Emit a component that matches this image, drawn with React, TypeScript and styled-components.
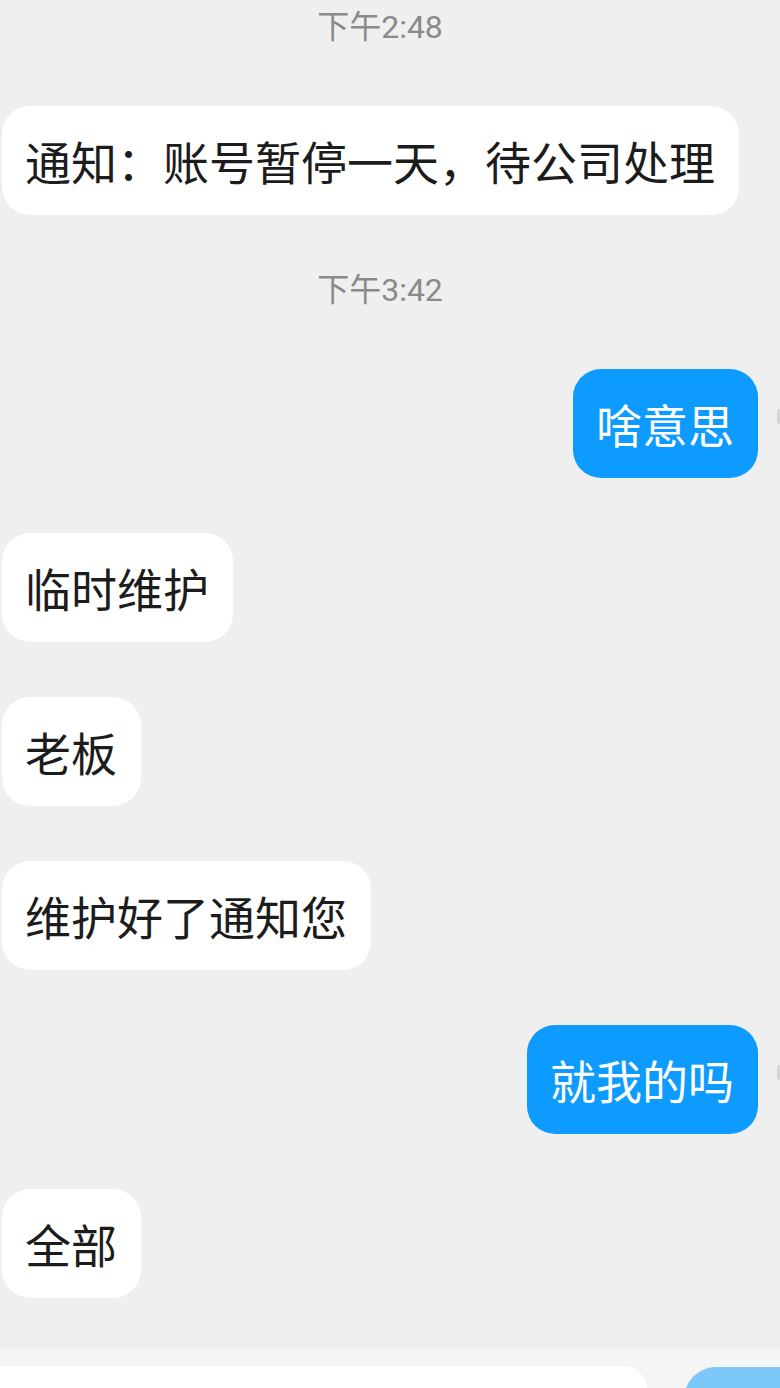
import styled, { createGlobalStyle } from "styled-components";

const GlobalStyle = createGlobalStyle`
  html, body {
    margin: 0;
    padding: 0;
    background: #efefef;
    overflow: hidden;
  }
  body {
    font-family: "Noto Sans CJK SC", "Noto Sans", sans-serif;
  }
`;

const Container = styled.div`
  width: 780px;
  height: 1388px;
  overflow: hidden;
  display: flex;
  flex-flow: column nowrap;
  background: #efefef;
`;

const TimeLabel = styled.div`
  margin-top: 51px;
  padding-right: 20px;
  height: 48px;
  line-height: 48px;
  text-align: center;
  font-family: Roboto, "Noto Sans CJK SC", sans-serif;
  font-size: 32px;
  color: #8a8a8a;

  &:first-child {
    margin-top: 3px;
  }
`;

const Row = styled.div<{ $mine?: boolean }>`
  margin-top: 55px;
  display: flex;
  flex-flow: row nowrap;
  align-items: center;
  justify-content: ${(props) => (props.$mine ? "flex-end" : "flex-start")};
  padding-left: ${(props) => (props.$mine ? "0" : "2px")};
`;

const Bubble = styled.div<{ $mine?: boolean }>`
  padding: 24px 24px 24px 23px;
  border-radius: 28px;
  font-size: 46px;
  line-height: 61px;
  white-space: nowrap;
  background: ${(props) => (props.$mine ? "#0e9bff" : "#ffffff")};
  color: ${(props) => (props.$mine ? "#ffffff" : "#1c1c1c")};
`;

const Status = styled.span`
  display: block;
  width: 3px;
  height: 15px;
  margin-left: 19px;
  margin-bottom: 14px;
  background: #d6d6d6;
  border-radius: 2px 0 0 2px;
`;

const InputBar = styled.div`
  margin-top: 51px;
  padding-top: 17px;
  background: #f5f5f5;
  display: flex;
  flex-flow: row nowrap;
  align-items: flex-start;
  height: 80px;
  overflow: hidden;
`;

const InputBox = styled.div`
  flex-shrink: 0;
  width: 671px;
  height: 90px;
  margin-left: -24px;
  background: #ffffff;
  border-radius: 24px;
`;

const SendButton = styled.div`
  flex-shrink: 0;
  width: 140px;
  height: 90px;
  margin-left: 37px;
  margin-top: 1px;
  background: #7cc8f8;
  border-radius: 32px;
`;

type Item =
  | { kind: "time"; text: string }
  | { kind: "msg"; text: string; mine?: boolean };

const items: Item[] = [
  { kind: "time", text: "下午2:48" },
  { kind: "msg", text: "通知：账号暂停一天，待公司处理" },
  { kind: "time", text: "下午3:42" },
  { kind: "msg", text: "啥意思", mine: true },
  { kind: "msg", text: "临时维护" },
  { kind: "msg", text: "老板" },
  { kind: "msg", text: "维护好了通知您" },
  { kind: "msg", text: "就我的吗", mine: true },
  { kind: "msg", text: "全部" },
];

function App() {
  return (
    <>
      <GlobalStyle />
      <Container>
        {items.map((item, i) =>
          item.kind === "time" ? (
            <TimeLabel key={i}>{item.text}</TimeLabel>
          ) : (
            <Row key={i} $mine={item.mine}>
              <Bubble $mine={item.mine}>{item.text}</Bubble>
              {item.mine && <Status />}
            </Row>
          )
        )}
        <InputBar>
          <InputBox />
          <SendButton />
        </InputBar>
      </Container>
    </>
  );
}

export default App;
